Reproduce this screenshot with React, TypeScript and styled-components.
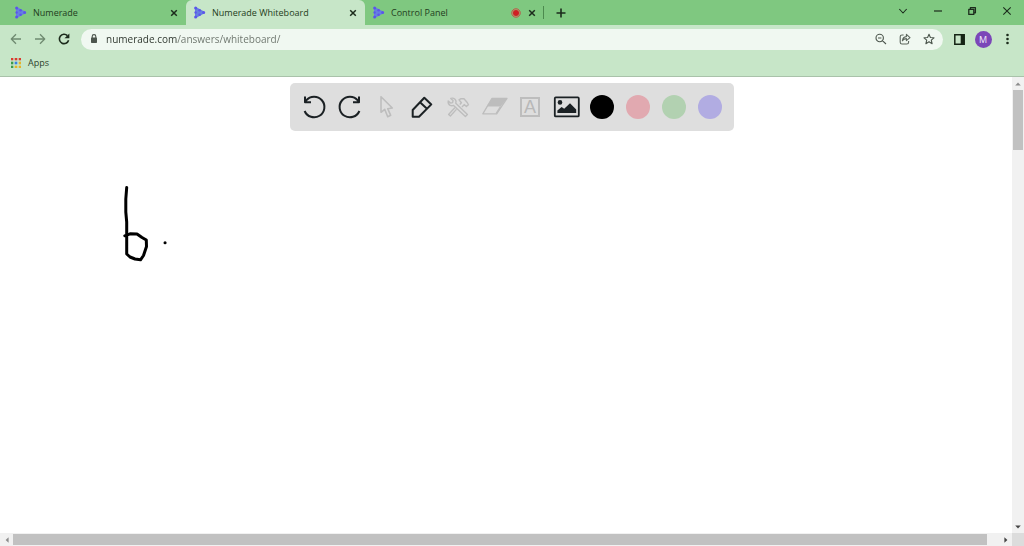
import React from "react";
import styled, { createGlobalStyle } from "styled-components";

const GlobalStyle = createGlobalStyle`
  * { box-sizing: border-box; }
  body { margin: 0; background: #fff; }
  body, button, input { font-family: "Open Sans", "Noto Sans", sans-serif; }
`;

const Window = styled.div`
  display: flex;
  flex-direction: column;
  min-height: 100vh;
`;

const IconButton = styled.button<{ $w?: number; $h?: number; $color?: string }>`
  display: flex;
  align-items: center;
  justify-content: center;
  flex: none;
  width: ${(p) => p.$w ?? 24}px;
  height: ${(p) => p.$h ?? 24}px;
  padding: 0;
  border: 0;
  background: none;
  color: ${(p) => p.$color ?? "#1c2b1c"};
  cursor: pointer;
  svg { display: block; overflow: visible; }
`;

const TabStrip = styled.header`
  display: flex;
  align-items: stretch;
  height: 25px;
  background: #7fc880;
`;

const Tab = styled.div<{ $active?: boolean; $first?: boolean }>`
  display: flex;
  align-items: center;
  flex: 0 1 ${(p) => (p.$first ? 186 : 179)}px;
  min-width: 0;
  gap: 6px;
  padding: 0 7px 0 ${(p) => (p.$first ? 15 : 8)}px;
  border-radius: 6px 6px 0 0;
  background: ${(p) => (p.$active ? "#c7e6c8" : "transparent")};
`;

const TabLink = styled.a`
  flex: 1;
  min-width: 0;
  overflow: hidden;
  white-space: nowrap;
  color: #1f3d20;
  font-size: 9px;
  line-height: 16px;
  text-decoration: none;
`;

const NewTab = styled.div`
  display: flex;
  align-items: center;
  padding-left: 5px;
  &::before {
    content: "";
    width: 1px;
    height: 13px;
    margin-left: -6px;
    margin-right: 5px;
    background: #4c8a4e;
  }
`;

const WindowControls = styled.div`
  display: flex;
  height: 22px;
  margin-left: auto;
`;

const NavBar = styled.nav`
  display: flex;
  align-items: center;
  height: 28px;
  padding: 0 5px 0 4px;
  background: #c7e6c8;
`;

const Omnibox = styled.div`
  display: flex;
  align-items: center;
  flex: 1;
  min-width: 0;
  height: 21px;
  margin: 0 4px 0 5px;
  padding: 0 2px 0 9px;
  border-radius: 11px;
  background: #f0f8f1;
`;

const Address = styled.input`
  flex: 1;
  min-width: 0;
  margin-left: 8px;
  padding: 0;
  border: 0;
  outline: 0;
  font-size: 10px;
  line-height: 16px;
  color: #2b332b;
  background: linear-gradient(to right, #2b332b 71px, #6a726a 71px);
  background-clip: text;
  -webkit-background-clip: text;
  -webkit-text-fill-color: transparent;
`;

const Avatar = styled.span`
  width: 17px;
  height: 17px;
  border-radius: 50%;
  background: #7b46b8;
  color: #f3eafa;
  font-size: 9px;
  line-height: 17px;
  text-align: center;
`;

const Bookmarks = styled.div`
  display: flex;
  align-items: center;
  height: 24px;
  padding: 0 11px 3px;
  border-bottom: 1px solid #a9c2aa;
  background: #c7e6c8;
`;

const AppsButton = styled.button`
  display: flex;
  align-items: center;
  gap: 7px;
  padding: 0;
  border: 0;
  background: none;
  color: #2c3f2d;
  font-size: 9px;
  line-height: 16px;
`;

const Viewport = styled.main`
  position: relative;
  flex: 1;
  display: grid;
  grid-template: 1fr 13px / 1fr 12px;
`;

const Board = styled.section`
  min-width: 0;
  background: #fff;
  svg { display: block; }
`;

const Toolbar = styled.div`
  position: absolute;
  top: 6px;
  left: 50%;
  transform: translateX(-50%);
  display: flex;
  align-items: center;
  height: 48px;
  padding: 0 6px;
  border-radius: 5px;
  background: #dedede;
`;

const Swatch = styled.span<{ $fill: string }>`
  width: 24px;
  height: 24px;
  border-radius: 50%;
  background: ${(p) => p.$fill};
`;

const LetterBox = styled.span`
  width: 20px;
  height: 20px;
  border: 2px solid #bdbdbd;
  color: #b8b8b8;
  font: 18px/17px "Liberation Sans", sans-serif;
  text-align: center;
`;

const Scrollbar = styled.div<{ $vertical?: boolean }>`
  display: flex;
  flex-direction: ${(p) => (p.$vertical ? "column" : "row")};
  align-items: center;
  background: #f1f1f1;
`;

const Track = styled.div<{ $vertical?: boolean }>`
  display: flex;
  flex: 1;
  align-self: stretch;
  flex-direction: ${(p) => (p.$vertical ? "column" : "row")};
  padding: ${(p) => (p.$vertical ? "0 1px" : "1px 0")};
`;

const Thumb = styled.div<{ $share: number }>`
  flex: 0 0 ${(p) => p.$share}%;
  background: #c1c1c1;
`;

const Corner = styled.div`
  background: #dcdcdc;
`;

const Favicon = () => (
  <svg width="12" height="13" viewBox="0 0 12 13" aria-hidden="true">
    <path d="M2 2 L10 6.5 L2 11Z" fill="#6580e0" stroke="#6580e0" strokeWidth="2" strokeLinejoin="round" />
    <g fill="#5c55ea">
      <circle cx="1.6" cy="2" r="1.5" />
      <circle cx="1.6" cy="6.5" r="1.2" />
      <circle cx="1.6" cy="11" r="1.5" />
      <circle cx="5.6" cy="4.2" r="1.3" />
      <circle cx="5.6" cy="8.8" r="1.3" />
      <circle cx="9.6" cy="6.5" r="1.5" />
    </g>
  </svg>
);

const Line = ({ d, size = 24, w = 2 }: { d: string; size?: number; w?: number }) => (
  <svg width={size} height={size} viewBox={`0 0 ${size} ${size}`} fill="none" stroke="currentColor" strokeWidth={w} strokeLinejoin="round" aria-hidden="true">
    <path d={d} />
  </svg>
);

const CloseTab = ({ name }: { name: string }) => (
  <IconButton $w={10} $h={12} aria-label={`Close ${name}`}>
    <Line size={8} w={1.5} d="M1.2 1.2 L6.8 6.8 M6.8 1.2 L1.2 6.8" />
  </IconButton>
);

const Triangle = ({ d, dark }: { d: string; dark?: boolean }) => (
  <svg width="6" height="6" viewBox="0 0 6 6" aria-hidden="true">
    <path d={d} fill={dark ? "#444" : "#8c8c8c"} />
  </svg>
);

const LIGHT = "#bdbdbd";
const INK = "#1b2124";

const dots = ["#d93a2f", "#d93a2f", "#d93a2f", "#3d9a4b", "#3b82e0", "#e5b32a", "#3d9a4b", "#e5b32a", "#e5b32a"];

const swatches = [
  { name: "Black", fill: "#000" },
  { name: "Red", fill: "#e1a9b0" },
  { name: "Green", fill: "#b2d1b1" },
  { name: "Purple", fill: "#b1ace2" },
];

export default function App() {
  return (
    <Window>
      <GlobalStyle />
      <TabStrip>
        <Tab $first>
          <Favicon />
          <TabLink href="#numerade">Numerade</TabLink>
          <CloseTab name="Numerade" />
        </Tab>
        <Tab $active>
          <Favicon />
          <TabLink href="#whiteboard">Numerade Whiteboard</TabLink>
          <CloseTab name="Numerade Whiteboard" />
        </Tab>
        <Tab>
          <Favicon />
          <TabLink href="#control">Control Panel</TabLink>
          <svg width="10" height="10" viewBox="0 0 10 10" role="img" aria-label="Recording">
            <circle cx="5" cy="5" r="4.2" fill="#a8b47c" stroke="#c1443a" strokeWidth="0.9" />
            <circle cx="5" cy="5" r="3" fill="#cf1f24" />
          </svg>
          <CloseTab name="Control Panel" />
        </Tab>
        <NewTab>
          <IconButton aria-label="New tab">
            <Line size={10} w={1.6} d="M5 0.5 V9.5 M0.5 5 H9.5" />
          </IconButton>
        </NewTab>
        <WindowControls>
          <IconButton $w={34} $h={22} aria-label="Search tabs"><Line size={8} w={1.1} d="M0.3 2 L4 6 L7.7 2" /></IconButton>
          <IconButton $w={35} $h={22} aria-label="Minimize"><Line size={8} w={1.2} d="M0 4 H8" /></IconButton>
          <IconButton $w={34} $h={22} aria-label="Restore"><Line size={8} w={1.3} d="M0.8 2.4 H5.8 V7.4 H0.8Z M2.4 2 V0.7 H7.4 V5.8 H6" /></IconButton>
          <IconButton $w={35} $h={22} aria-label="Close window"><Line size={8} w={1.1} d="M0.3 0.3 L7.7 7.7 M7.7 0.3 L0.3 7.7" /></IconButton>
        </WindowControls>
      </TabStrip>

      <NavBar>
        <IconButton $color="#6f8a70" aria-label="Back"><Line size={12} w={1.3} d="M11 6 H1.3 M6 1.3 L1.3 6 L6 10.7" /></IconButton>
        <IconButton $color="#6f8a70" aria-label="Forward"><Line size={12} w={1.3} d="M1 6 H10.7 M6 1.3 L10.7 6 L6 10.7" /></IconButton>
        <IconButton aria-label="Reload">
          <svg width="12" height="12" viewBox="0 0 12 12" aria-hidden="true">
            <path d="M9.4 2.6 A4.7 4.7 0 1 0 10.6 7.3" fill="none" stroke="currentColor" strokeWidth="1.6" />
            <path d="M11.4 0.4 V5.3 H6.5Z" fill="currentColor" />
          </svg>
        </IconButton>
        <Omnibox>
          <svg width="8" height="10" viewBox="0 0 8 10" aria-hidden="true">
            <path d="M2.2 4 V2.4 A1.8 1.8 0 0 1 5.8 2.4 V4" fill="none" stroke="#4c554d" strokeWidth="1.1" />
            <rect x="1" y="3.6" width="6" height="5.4" rx="0.7" fill="#4c554d" />
          </svg>
          <Address aria-label="Address" defaultValue="numerade.com/answers/whiteboard/" />
          <IconButton $h={20} $color="#4c564d" aria-label="Zoom"><Line size={12} w={1.1} d="M8.4 5 A3.7 3.7 0 1 1 1 5 A3.7 3.7 0 0 1 8.4 5Z M7.4 7.6 L11 11 M3 5 H6.4" /></IconButton>
          <IconButton $h={20} $color="#5c665d" aria-label="Share"><Line size={12} w={1.1} d="M4.6 2 H3 Q1.2 2 1.2 3.8 V9.2 Q1.2 11 3 11 H7.8 Q9.6 11 9.6 9.2 V8 M3.4 7.8 Q3.8 3.8 7.4 3.6 V1.4 L11 4.6 L7.4 7.6 V5.6 Q4.8 5.6 3.4 7.8Z" /></IconButton>
          <IconButton $h={20} $color="#4c564d" aria-label="Bookmark"><Line size={12} w={1.1} d="M6 1.2 L7.4 4.5 L11 4.8 L8.3 7.2 L9.1 10.7 L6 8.8 L2.9 10.7 L3.7 7.2 L1 4.8 L4.6 4.5Z" /></IconButton>
        </Omnibox>
        <IconButton $color="#142414" aria-label="Side panel">
          <svg width="11" height="11" viewBox="0 0 11 11" aria-hidden="true">
            <path d="M0.8 0.8 H10.2 V10.2 H0.8Z" fill="none" stroke="currentColor" strokeWidth="1.5" />
            <rect x="6.7" y="1" width="3.6" height="9" fill="currentColor" />
          </svg>
        </IconButton>
        <IconButton aria-label="Profile"><Avatar>M</Avatar></IconButton>
        <IconButton aria-label="Menu">
          <svg width="4" height="12" viewBox="0 0 4 12" fill="currentColor" aria-hidden="true">
            <circle cx="2.5" cy="2" r="1.3" /><circle cx="2.5" cy="6" r="1.3" /><circle cx="2.5" cy="10" r="1.3" />
          </svg>
        </IconButton>
      </NavBar>

      <Bookmarks>
        <AppsButton>
          <svg width="10" height="10" viewBox="0 0 10 10" aria-hidden="true">
            {dots.map((c, i) => (
              <rect key={i} x={(i % 3) * 4 - 0.3} y={Math.floor(i / 3) * 4 - 0.3} width="2.6" height="2.6" fill={c} />
            ))}
          </svg>
          Apps
        </AppsButton>
      </Bookmarks>

      <Viewport>
        <Board aria-label="Whiteboard">
          <svg width="200" height="200" viewBox="0 0 200 200" fill="none" stroke="#000" strokeWidth="3" strokeLinecap="round" strokeLinejoin="round" role="img" aria-label="Handwriting">
            <path d="M126.7 110.5 L125.8 122 V135 L126.7 145 V177 L130 180 L135 182 L140.5 182.8 L143.5 178.5 L146.5 169.5 L146.3 163 L142 160.5 L137 157 L130 156.8 L124.8 158.8" />
            <path d="M165 165.8 H165.1" />
          </svg>
        </Board>
        <Scrollbar $vertical>
          <IconButton $w={12} $h={13} aria-label="Scroll up"><Triangle d="M0.2 4.6 L3 1.6 L5.8 4.6Z" /></IconButton>
          <Track $vertical><Thumb $share={14} /></Track>
          <IconButton $w={12} $h={13} aria-label="Scroll down"><Triangle dark d="M0.2 1.4 L3 4.4 L5.8 1.4Z" /></IconButton>
        </Scrollbar>
        <Scrollbar>
          <IconButton $w={13} $h={12} aria-label="Scroll left"><Triangle d="M4.6 0.2 L1.6 3 L4.6 5.8Z" /></IconButton>
          <Track><Thumb $share={98.8} /></Track>
          <IconButton $w={13} $h={12} aria-label="Scroll right"><Triangle dark d="M1.4 0.2 L4.4 3 L1.4 5.8Z" /></IconButton>
        </Scrollbar>
        <Corner />

        <Toolbar role="toolbar" aria-label="Drawing tools">
          <IconButton $w={36} $h={36} $color={INK} aria-label="Undo"><Line d="M2.6 16 A10.3 10.3 0 1 0 4.2 5.4 L3 7 M3 1.4 V7.2 H9" /></IconButton>
          <IconButton $w={36} $h={36} $color={INK} aria-label="Redo"><Line d="M21.4 16 A10.3 10.3 0 1 1 19.8 5.4 L21 7 M21 1.4 V7.2 H15" /></IconButton>
          <IconButton $w={36} $h={36} $color={LIGHT} aria-label="Select"><Line w={1.6} d="M7 1.7 V17.3 L10.7 14.3 L13.7 21.7 L16.7 20.3 L13.7 13.7 L18.3 13Z" /></IconButton>
          <IconButton $w={36} $h={36} $color={INK} aria-label="Pen"><Line d="M2.7 15 L14.3 2.8 L21.3 9.4 L9 21.7 H2.7Z M10 7.3 L17 13.7" /></IconButton>
          <IconButton $w={36} $h={36} $color={LIGHT} aria-label="Tools"><Line w={1.4} d="M4.8 3.4 L7 5.6 L6.6 7.6 L4.6 8 L2.2 6 Q1.8 9.2 4.2 10.4 Q6 11.2 7.6 10.4 L19.4 21.6 L21.4 19.6 L9.8 8.2 Q10.6 5.8 9 4.2 Q7.2 2.6 4.8 3.4Z M10.4 14.4 L4.4 21 L2.6 19.4 L8.8 12.8 M13.8 9.4 L15.4 7.8 L13 4.8 L14.6 3.8 H18 L21.4 7.8 L22.4 9.8 L20.4 11.6 L18.2 9.6 L16 12" /></IconButton>
          <IconButton $w={36} $h={36} $color={LIGHT} aria-label="Eraser">
            <svg width="24" height="24" viewBox="0 0 24 24" aria-hidden="true">
              <path d="M10 3.4 H25 L18.6 11.6 H4.6Z" fill="currentColor" />
              <path d="M10 3.4 H25 L14.6 18.8 H0.8Z" fill="none" stroke="currentColor" strokeWidth="1.3" strokeLinejoin="round" />
              <path d="M18.6 11.6 L14.4 18.4" fill="none" stroke="currentColor" strokeWidth="1.6" />
            </svg>
          </IconButton>
          <IconButton $w={36} $h={36} aria-label="Text"><LetterBox>A</LetterBox></IconButton>
          <IconButton $w={36} $h={36} $color={INK} aria-label="Image">
            <svg width="24" height="24" viewBox="0 0 24 24" aria-hidden="true">
              <rect x="0.8" y="2.4" width="24" height="19" rx="1" fill="none" stroke="currentColor" strokeWidth="1.8" />
              <circle cx="6" cy="7.4" r="2.3" fill="currentColor" />
              <path d="M3.4 18 V15.6 L7.6 12 L10.2 13.8 L16 8.2 L22.2 14.6 V18Z" fill="currentColor" />
            </svg>
          </IconButton>
          {swatches.map((s) => (
            <IconButton key={s.name} $w={36} $h={36} aria-label={s.name}><Swatch $fill={s.fill} /></IconButton>
          ))}
        </Toolbar>
      </Viewport>
    </Window>
  );
}
